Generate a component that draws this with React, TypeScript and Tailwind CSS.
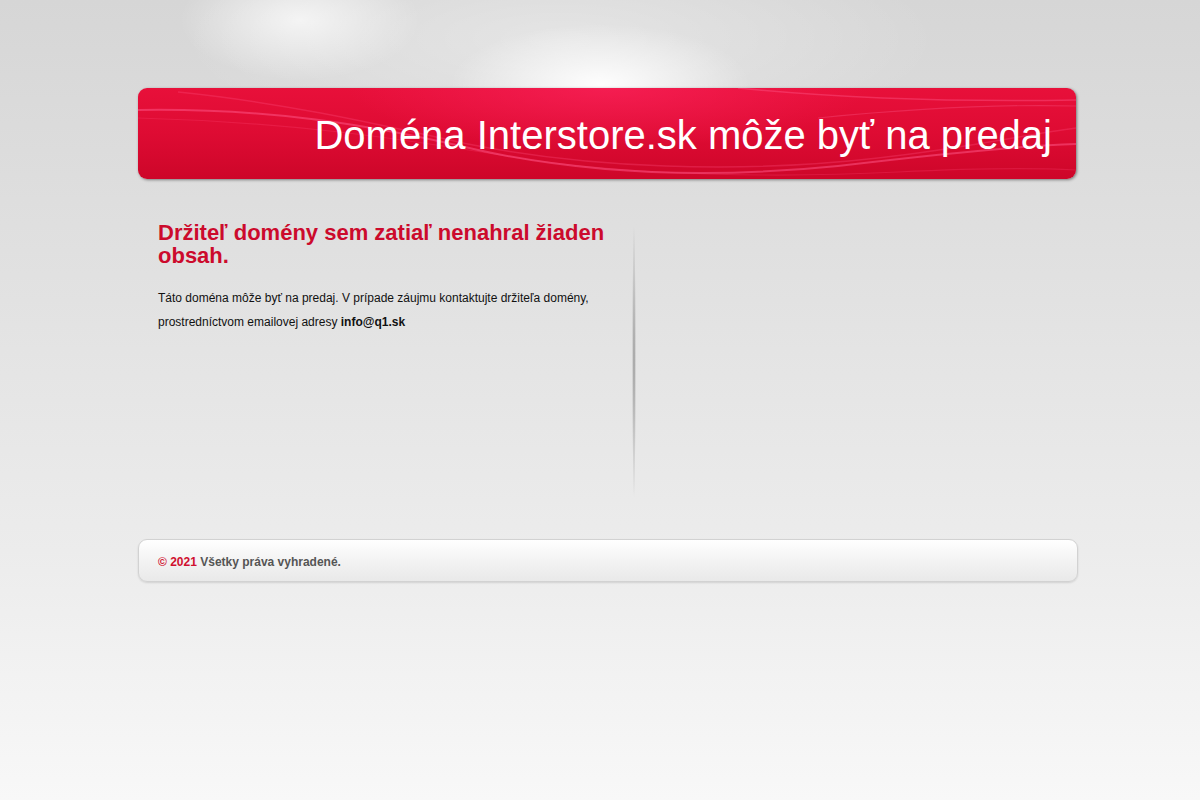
import React from "react";

export default function App() {
  return (
    <div
      className="relative w-full min-h-[800px] overflow-hidden"
      style={{
        background:
          "radial-gradient(ellipse 120px 60px at 300px 20px, rgba(255,255,255,0.7), rgba(255,255,255,0) 100%), radial-gradient(ellipse 150px 60px at 600px 84px, rgba(255,255,255,0.95), rgba(255,255,255,0) 100%), radial-gradient(ellipse 380px 110px at 560px 40px, rgba(255,255,255,0.35), rgba(255,255,255,0) 100%), linear-gradient(to bottom, #d6d6d6 0px, #e2e2e2 300px, #ececec 550px, #f8f8f8 800px)",
        fontFamily: '"Liberation Sans", Arial, sans-serif',
      }}
    >
      <div className="w-[960px] mx-auto pl-[18px] pr-[2px] pt-[88px]">
        {/* Header */}
        <div
          className="relative h-[91px] w-[938px] rounded-[9px] overflow-hidden flex items-center justify-end pr-[24px] shadow-[1px_1px_3px_rgba(0,0,0,0.45)]"
          style={{
            background:
              "radial-gradient(ellipse 260px 60px at 470px 0px, rgba(255,40,100,0.55), rgba(255,40,100,0) 100%), linear-gradient(to bottom, #e8103a 0%, #de0b33 50%, #cd0629 100%)",
          }}
        >
          <svg
            className="absolute inset-0"
            width="938"
            height="91"
            viewBox="0 0 938 91"
            fill="none"
          >
            <path
              d="M0 22 C 130 20, 230 36, 340 62 C 440 84, 560 92, 700 78 C 800 66, 880 58, 938 56"
              stroke="rgba(255,90,140,0.5)"
              strokeWidth="2"
            />
            <path
              d="M40 4 C 140 14, 230 34, 330 56 C 450 80, 600 86, 740 70 C 830 60, 890 46, 938 40"
              stroke="rgba(255,80,130,0.3)"
              strokeWidth="1.5"
            />
            <path
              d="M0 30 C 150 34, 260 50, 380 70 C 500 88, 640 90, 760 84 C 840 80, 900 80, 938 82"
              stroke="rgba(255,70,120,0.25)"
              strokeWidth="1.2"
            />
            <path
              d="M600 0 C 700 10, 820 14, 938 12"
              stroke="rgba(255,90,140,0.4)"
              strokeWidth="1.5"
            />
            <path
              d="M680 30 C 780 20, 860 16, 938 18"
              stroke="rgba(255,100,150,0.3)"
              strokeWidth="1.2"
            />
          </svg>
          <h1 className="relative text-white text-[40px] leading-none font-normal mt-[2px]">
            Doména Interstore.sk môže byť na predaj
          </h1>
        </div>

        {/* Content */}
        <div className="flex pt-[42px] h-[360px]">
          <div className="w-[494px] pl-[20px] pr-[12px]">
            <h2 className="text-[#cc0a2c] text-[22px] leading-[23px] font-bold">
              Držiteľ domény sem zatiaľ nenahral žiaden obsah.
            </h2>
            <p className="mt-[19px] text-[12px] leading-[24px] text-[#111]">
              Táto doména môže byť na predaj. V prípade záujmu kontaktujte
              držiteľa domény, prostredníctvom emailovej adresy{" "}
              <b className="font-bold">info@q1.sk</b>
            </p>
          </div>
          <div
            className="w-[4px] h-[280px] mt-[1px]"
            style={{
              background:
                "radial-gradient(ellipse 2px 140px at 2px 140px, rgba(140,140,140,0.85), rgba(160,160,160,0) 100%)",
            }}
          />
        </div>

        {/* Footer */}
        <div
          className="h-[43px] w-[940px] rounded-[9px] border border-[#d2d2d2] flex items-center pl-[19px] pt-[2px] shadow-[0_1px_2px_rgba(0,0,0,0.12)]"
          style={{
            background: "linear-gradient(to bottom, #ffffff 0%, #f3f3f3 50%, #e9e9e9 100%)",
          }}
        >
          <span className="text-[12px] font-bold text-[#555]">
            <span className="text-[#d0102f]">© 2021</span> Všetky práva
            vyhradené.
          </span>
        </div>
      </div>
    </div>
  );
}
